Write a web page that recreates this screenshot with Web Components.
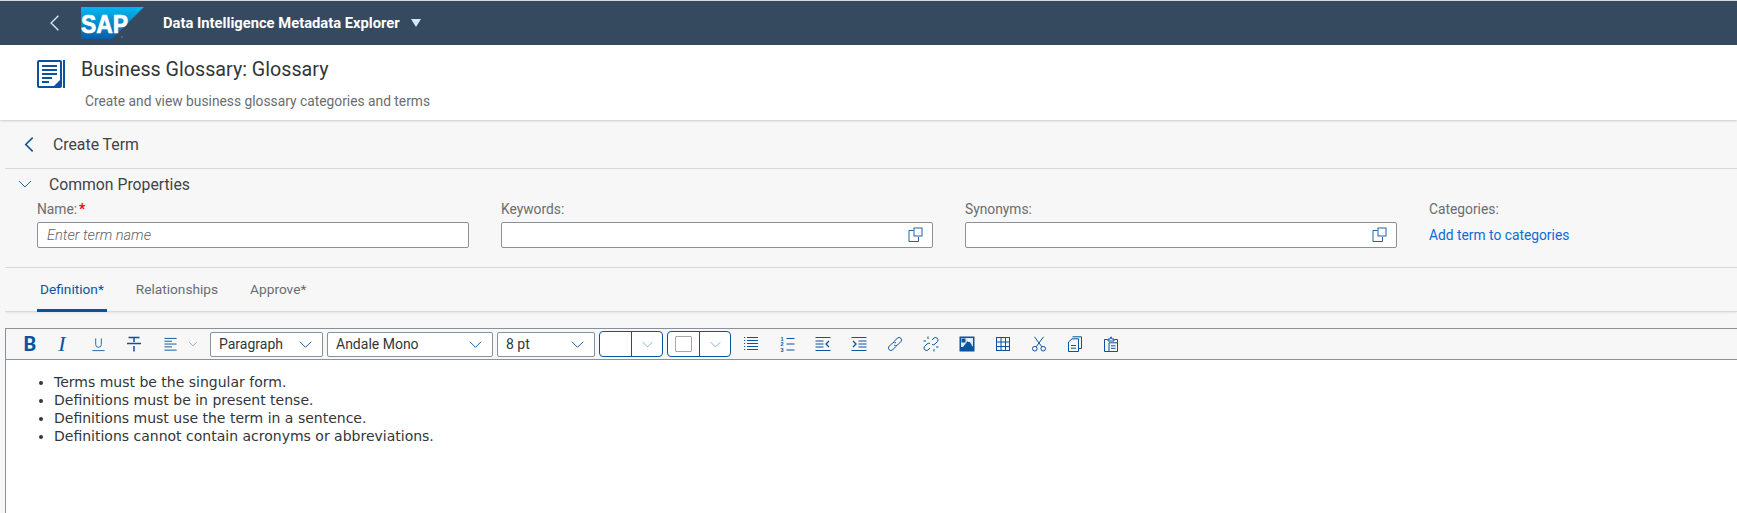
<!DOCTYPE html>
<html lang="en">
<head>
<meta charset="utf-8">
<title>Business Glossary</title>
<style>
  html, body { margin: 0; height: 100%; overflow: hidden; background: #f7f7f7; }
  body { font-family: Roboto, "Liberation Sans", sans-serif; color: #32363a; font-size: 14px; }
</style>
</head>
<body>
<shell-bar>Data Intelligence Metadata Explorer</shell-bar>
<page-header heading="Business Glossary: Glossary">Create and view business glossary categories and terms</page-header>
<sub-header>Create Term</sub-header>
<common-properties></common-properties>
<tab-strip></tab-strip>
<rich-editor>
  <li>Terms must be the singular form.</li>
  <li>Definitions must be in present tense.</li>
  <li>Definitions must use the term in a sentence.</li>
  <li>Definitions cannot contain acronyms or abbreviations.</li>
</rich-editor>

<script>
// all toolbar / field glyphs live here, 16x16 grid, stroked in currentColor
const ICONS = {
  back: '<path d="M11 1.5 4.500 8l6.500 6.500"/>',
  down: '<path d="M2 5l6 6 6-6"/>',
  valueHelp: '<path d="M5.500 3.500H1v11h9.500V10"/><rect x="6" y="1" width="8" height="8"/>',
  underline: '<path d="M5 1.500V8a3 3 0 0 0 6 0V1.500M1.500 14.500h13"/>',
  strike: '<path d="M1 7.500h14M2.500 1.500h11M8 1.500v4.500M8 10v5.500" stroke-width="1.5"/>',
  align: '<path d="M1.500 1.500h13M1.500 4.500h8M1.500 7.500h13M1.500 10.500h8M1.500 14h13"/>',
  list: '<path d="M4 1.500h11M4 4.500h11M4 7.500h11M4 10.500h11M4 13.500h11"/><path d="M1 1.500h1.200M1 4.500h1.200M1 7.500h1.200M1 10.500h1.200M1 13.500h1.200"/>',
  numbered: '<path d="M7.500 2.500h8M7.500 8h8M7.500 14h8"/><g font-family="Liberation Sans, sans-serif" font-weight="700" font-size="5.500" fill="currentColor" stroke="none"><text x="1.500" y="4.500">1</text><text x="1.500" y="10">2</text><text x="1.500" y="15.800">3</text></g>',
  outdent: '<path d="M.5 1.500h15M.5 14.500h15M.5 5h8M.5 8h8M.5 11h8"/><path d="M14 5l-3 3 3 3" stroke-width="1.300"/>',
  indent: '<path d="M.5 1.500h15M.5 14.500h15M7.500 5h8M7.500 8h8M7.500 11h8"/><path d="M2 5l3 3-3 3" stroke-width="1.300"/>',
  link: '<path d="M7 5.500 10.500 2a2.500 2.500 0 0 1 3.500 3.500L10.500 9a2.500 2.500 0 0 1-3.500 0"/><path d="M9 10.500 5.500 14A2.500 2.500 0 0 1 2 10.500L5.500 7a2.500 2.500 0 0 1 3.500 0"/>',
  unlink: '<path d="M9 4l2-2a2.500 2.500 0 0 1 3.500 3.500L12 8a2.500 2.500 0 0 1-3 .5"/><path d="M7 12l-2 2a2.500 2.500 0 0 1-3.500-3.500L4 8a2.500 2.500 0 0 1 3-.5"/><path d="M5 .5v2.500M.5 5H3M11 13v2.500M13 11h2.500"/>',
  image: '<rect x=".5" y=".5" width="15" height="15" fill="currentColor" stroke="none"/><rect x="2" y="2" width="12" height="9" fill="#dbe7f3" stroke="none"/><rect x="2.500" y="2.500" width="4" height="4" fill="currentColor" stroke="none"/><path d="M4 11 9.500 4l4.500 7z" fill="currentColor" stroke="none"/><circle cx="10" cy="4.500" r="1.500" fill="#fff" stroke="none"/>',
  table: '<rect x="1.500" y="1.500" width="13" height="13"/><path d="M1.500 6h13M1.500 10.500h13M6 1.500v13M10.500 1.500v13"/>',
  cut: '<circle cx="3.800" cy="12.700" r="2.300"/><circle cx="12.200" cy="12.700" r="2.300"/><path d="M5.200 10.800 12.500.8M10.800 10.800 3.500.8"/>',
  copy: '<path d="M1.500 6 5 2.800h6.500v12.700h-10z"/><path d="M5.500 .8h9v11.700h-3"/><path d="M4 9.500h5M4 12.200h5"/>',
  paste: '<path d="M4.500 3.500H1.500v12H14.500V3.500h-3"/><path d="M5 5V3h2L8 .8 9 3h2v2z"/><path d="M6 6.800h8.500M6 6.800v8.700M8 9.800h4.500M8 12.300h4.500"/>'
};

class UiIcon extends HTMLElement {
  connectedCallback() {
    const size = this.getAttribute('size') || 16;
    const weight = this.getAttribute('weight') || 1;
    this.attachShadow({ mode: 'open' });
    this.shadowRoot.innerHTML = `
      <style>
        :host { display: inline-flex; color: inherit; flex: none; }
        svg { display: block; fill: none; stroke: currentColor; stroke-width: ${weight}; }
      </style>
      <svg width="${size}" height="${size}" viewBox="0 0 16 16">${ICONS[this.getAttribute('name')] || ''}</svg>`;
  }
}

class ShellBar extends HTMLElement {
  constructor() {
    super();
    this.attachShadow({ mode: 'open' });
    this.shadowRoot.innerHTML = `
      <style>
        :host {
          display: flex; align-items: center; box-sizing: border-box; height: 45px;
          border-top: 1px solid #d9d9d9; background: #354a5f; color: #fff;
          padding-left: 46px; font-size: 14.75px; font-weight: 700;
        }
        .back { color: #d1e8ff; margin-right: 17px; }
        .logo { display: block; margin-right: 19px; }
        .logo text { font-family: "Liberation Sans", sans-serif; font-weight: 700; font-size: 25px; fill: #fff; stroke: #fff; stroke-width: .7; }
        .caret { margin-left: 11px; width: 0; height: 0; border: 5.500px solid transparent; border-top: 8px solid #d1e8ff; border-bottom: 0; }
      </style>
      <ui-icon class="back" name="back" size="18" weight="1.200"></ui-icon>
      <svg class="logo" width="63" height="32" viewBox="0 0 63 32">
        <defs><linearGradient id="sapg" x1="0" y1="0" x2="0" y2="1"><stop offset="0" stop-color="#00b8f1"/><stop offset="1" stop-color="#0a5da8"/></linearGradient></defs>
        <polygon points="0,0 63,0 31,32 0,32" fill="url(#sapg)"/>
        <text x="0" y="25.500" textLength="47" lengthAdjust="spacingAndGlyphs">SAP</text>
        <circle cx="41" cy="30" r="1.200" fill="#2f6ea8"/>
      </svg>
      <span><slot></slot></span>
      <span class="caret"></span>`;
  }
}

class PageHeader extends HTMLElement {
  constructor() {
    super();
    this.attachShadow({ mode: 'open' });
    this.shadowRoot.innerHTML = `
      <style>
        :host {
          display: flex; box-sizing: border-box; height: 75px; background: #fff;
          padding: 15px 0 0 37px; box-shadow: 0 1px 2px rgba(0,0,0,.18); position: relative;
        }
        svg { display: block; margin-right: 16px; }
        .text { margin-top: -4px; }
        h1 { margin: 0; font-size: 19.7px; font-weight: 400; line-height: 28px; color: #32363a; }
        p { margin: 8px 0 0 4px; font-size: 13.8px; line-height: 18px; color: #6a6d70; }
      </style>
      <svg width="28" height="28" viewBox="0 0 28 28">
        <rect x="1" y="1" width="23" height="26" rx="1" fill="#fff" stroke="#0854a0" stroke-width="2"/>
        <rect x="26" y="0" width="2" height="28" fill="#0854a0"/>
        <path d="M5 6h15M5 10h15M5 14h15M5 18h10M5 22h7" stroke="#0854a0" stroke-width="2"/>
        <path d="M24 19v8h-8z" fill="#0854a0"/>
      </svg>
      <div class="text">
        <h1></h1>
        <p><slot></slot></p>
      </div>`;
    this.shadowRoot.querySelector('h1').textContent = this.getAttribute('heading');
  }
}

class SubHeader extends HTMLElement {
  constructor() {
    super();
    this.attachShadow({ mode: 'open' });
    this.shadowRoot.innerHTML = `
      <style>
        :host {
          display: flex; align-items: center; box-sizing: border-box; height: 49px;
          margin-left: 5px; padding-left: 16px; border-bottom: 1px solid #d9d9d9;
          font-size: 15.8px; color: #3f4347;
        }
        ui-icon { color: #0854a0; margin-right: 15px; }
      </style>
      <ui-icon name="back" size="17" weight="1.500"></ui-icon>
      <span><slot></slot></span>`;
  }
}

class FormField extends HTMLElement {
  constructor() {
    super();
    this.attachShadow({ mode: 'open' });
    const placeholder = this.getAttribute('placeholder');
    const help = this.hasAttribute('help');
    this.shadowRoot.innerHTML = `
      <style>
        :host { display: block; width: 432px; }
        label { display: block; height: 22px; line-height: 18px; font-size: 13.8px; color: #6a6d70; }
        b { color: #e00; font-weight: 700; margin-left: 2px; }
        .box {
          display: flex; align-items: center; justify-content: space-between; box-sizing: border-box;
          height: 26px; background: #fff; border: 1px solid #89919a; border-radius: 2px; padding: 0 8px 0 9px;
        }
        .hint { font-style: italic; font-size: 14.6px; font-weight: 300; color: #5f6265; }
        ui-icon { color: #0854a0; margin-left: auto; margin-top: -1px; }
      </style>
      <label>${this.getAttribute('label')}${this.hasAttribute('required') ? '<b>*</b>' : ''}</label>
      <div class="box">
        ${placeholder ? `<span class="hint">${placeholder}</span>` : ''}
        ${help ? '<ui-icon name="valueHelp" weight=".9"></ui-icon>' : ''}
      </div>`;
  }
}

class CommonProperties extends HTMLElement {
  constructor() {
    super();
    this.attachShadow({ mode: 'open' });
    this.shadowRoot.innerHTML = `
      <style>
        :host {
          display: block; box-sizing: border-box; height: 99px; margin-left: 5px;
          border-bottom: 1px solid #d9d9d9;
        }
        .head { display: flex; align-items: center; height: 30px; padding-left: 12px; font-size: 15.75px; color: #3f4347; }
        .head ui-icon { color: #0854a0; margin-right: 16px; }
        .row { display: flex; gap: 32px; padding-left: 32px; margin-top: 1px; }
        .cat { width: 200px; }
        .cat label { display: block; height: 22px; line-height: 18px; color: #6a6d70; font-size: 13.8px; }
        .cat a { display: block; line-height: 26px; color: #0a6ed1; font-size: 13.8px; text-decoration: none; }
      </style>
      <div class="head"><ui-icon name="down" size="16" weight=".9"></ui-icon>Common Properties</div>
      <div class="row">
        <form-field label="Name:" required placeholder="Enter term name"></form-field>
        <form-field label="Keywords:" help></form-field>
        <form-field label="Synonyms:" help></form-field>
        <div class="cat"><label>Categories:</label><a href="#">Add term to categories</a></div>
      </div>`;
  }
}

class TabStrip extends HTMLElement {
  constructor() {
    super();
    this.attachShadow({ mode: 'open' });
    this.shadowRoot.innerHTML = `
      <style>
        :host {
          display: flex; box-sizing: border-box; height: 44px; margin-left: 5px; padding-left: 32px;
          gap: 26px; border-bottom: 1px solid #d9d9d9; box-shadow: 0 2px 2px -1px rgba(0,0,0,.08); font-size: 13.7px;
        }
        span { display: flex; align-items: center; box-sizing: border-box; padding: 1px 3px 3px; color: #6a6d70; height: 44px; }
        .on { color: #0854a0; border-bottom: 3px solid #0854a0; padding-bottom: 0; }
      </style>
      <span class="on">Definition*</span>
      <span>Relationships</span>
      <span>Approve*</span>`;
  }
}

class RteSelect extends HTMLElement {
  constructor() {
    super();
    this.attachShadow({ mode: 'open' });
    this.shadowRoot.innerHTML = `
      <style>
        :host {
          display: flex; align-items: center; justify-content: space-between; box-sizing: border-box;
          width: var(--w); height: 25px; padding: 0 9px 0 8px; flex: none;
          background: #fff; border: 1px solid #89919a; border-radius: 2px; font-size: 14px; color: #32363a;
        }
        ui-icon { color: #0854a0; }
      </style>
      <span><slot></slot></span>
      <ui-icon name="down" size="15" weight="1"></ui-icon>`;
  }
}

class RteSplit extends HTMLElement {
  constructor() {
    super();
    this.attachShadow({ mode: 'open' });
    this.shadowRoot.innerHTML = `
      <style>
        :host {
          display: flex; box-sizing: border-box; width: 64px; height: 26px; flex: none;
          background: #fff; border: 1px solid #0854a0; border-radius: 4px;
        }
        .swatch { display: flex; align-items: center; justify-content: center; width: 31px; border-right: 1px solid #0854a0; }
        .arrow { display: flex; align-items: center; justify-content: center; flex: 1; color: #7d9fc4; }
        i { display: block; box-sizing: border-box; width: 17px; height: 16px; border: 1px solid #a6a6a6; border-radius: 1px; }
      </style>
      <div class="swatch">${this.hasAttribute('framed') ? '<i></i>' : ''}</div>
      <div class="arrow"><ui-icon name="down" size="13" weight="1"></ui-icon></div>`;
  }
}

class RteButton extends HTMLElement {
  constructor() {
    super();
    this.attachShadow({ mode: 'open' });
    this.shadowRoot.innerHTML = `
      <style>
        :host { display: flex; align-items: center; justify-content: center; width: 36px; height: 30px; flex: none; color: #0854a0; }
      </style>
      <slot></slot>`;
  }
}

class RichEditor extends HTMLElement {
  constructor() {
    super();
    this.attachShadow({ mode: 'open' });
    const tail = ['list','numbered','outdent','indent','link','unlink','image','table','cut','copy','paste'];
    this.shadowRoot.innerHTML = `
      <style>
        :host { display: block; margin: 16px 0 0 5px; border: 1px solid #89919a; border-width: 1px 0 0 1px; background: #fff; height: 184px; }
        .bar {
          display: flex; align-items: center; height: 30px; padding-left: 10px; background: #f7f7f7;
          border-bottom: 1px solid #89919a;
        }
        .bold { font: 700 20px Roboto, sans-serif; color: #0854a0; width: 28px; text-align: center; flex: none; }
        .ital { font: italic 400 22px "Liberation Serif", serif; }
        .caret { width: 22px; color: #5d8cc0; display: flex; flex: none; }
        .sel { display: flex; gap: 4px; align-items: center; }
        .tail { display: flex; margin-left: 2px; }
        ul { margin: 13px 0 0; padding-left: 48px; font: 14px/18px "DejaVu Sans", sans-serif; color: #32363a; }
      </style>
      <div class="bar">
        <span class="bold">B</span>
        <rte-button><span class="ital">I</span></rte-button>
        <rte-button><ui-icon name="underline" size="15" weight=".9"></ui-icon></rte-button>
        <rte-button><ui-icon name="strike" size="16"></ui-icon></rte-button>
        <rte-button><ui-icon name="align" size="15"></ui-icon></rte-button>
        <span class="caret"><ui-icon name="down" size="10" weight="1.100"></ui-icon></span>
        <div class="sel">
          <rte-select style="--w:113px">Paragraph</rte-select>
          <rte-select style="--w:166px">Andale Mono</rte-select>
          <rte-select style="--w:98px">8 pt</rte-select>
          <rte-split></rte-split>
          <rte-split framed></rte-split>
        </div>
        <div class="tail">
          ${tail.map(n => `<rte-button><ui-icon name="${n}"></ui-icon></rte-button>`).join('')}
        </div>
      </div>
      <ul><slot></slot></ul>`;
  }
}

customElements.define('ui-icon', UiIcon);
customElements.define('shell-bar', ShellBar);
customElements.define('page-header', PageHeader);
customElements.define('sub-header', SubHeader);
customElements.define('form-field', FormField);
customElements.define('common-properties', CommonProperties);
customElements.define('tab-strip', TabStrip);
customElements.define('rte-select', RteSelect);
customElements.define('rte-split', RteSplit);
customElements.define('rte-button', RteButton);
customElements.define('rich-editor', RichEditor);
</script>
</body>
</html>
